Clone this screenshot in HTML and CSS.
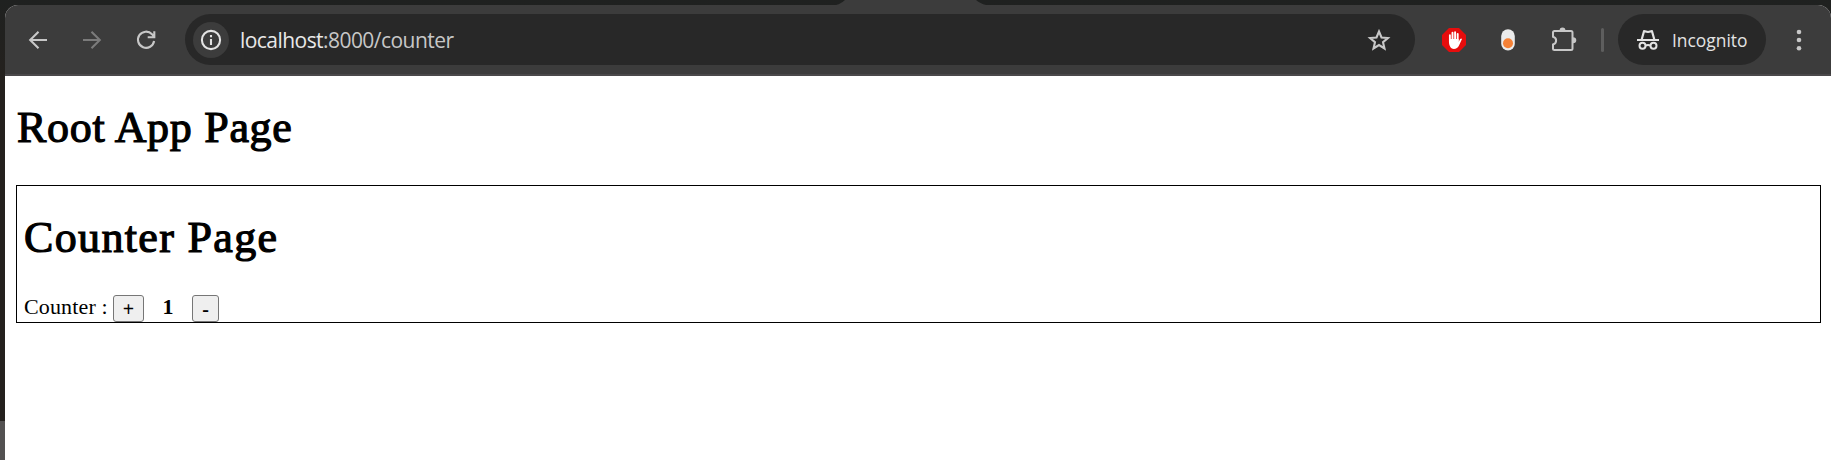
FILE: index.html
```html
<!DOCTYPE html>
<html lang="en">
<head>
<meta charset="utf-8">
<title>Root App Page</title>
<link rel="stylesheet" href="styles.css">
</head>
<body>
<div class="backdrop">
  <svg class="tab" width="150" height="5" viewBox="0 0 150 5"><path d="M0 5C4 4 6 2.500 9 0H140C143 2.500 146 4 150 5Z" fill="#3c3c3c"/></svg>
  <div class="window">
    <header class="toolbar">
      <nav class="nav">
        <svg class="icon" width="24" height="24" viewBox="0 0 24 24"><path d="M21 12H4M12.500 3.800 4.200 12l8.300 8.200"/></svg>
        <svg class="icon icon-off" width="24" height="24" viewBox="0 0 24 24"><path d="M3 12h17M11.500 3.800 19.800 12l-8.300 8.200"/></svg>
        <svg class="icon" width="24" height="24" viewBox="0 0 24 24"><path d="M20.100 13A8.100 8.100 0 1 1 18 6.200L20.300 9M20.300 3.200V9.200H13.700"/></svg>
      </nav>
      <div class="address">
        <span class="site-info">
          <svg class="icon icon-info" width="24" height="24" viewBox="0 0 24 24"><circle cx="12" cy="12" r="9.100"/><path d="M12 11v6M12 7v2.200"/></svg>
        </span>
        <span class="url"><span class="host">localhost</span>:8000/counter</span>
        <svg class="icon star" width="26" height="26" viewBox="0 0 26 26"><path d="M13 4.500 15.500 10.500 21.900 11 17 15.200 18.500 21.500 13 18.100 7.500 21.500 9 15.200 4.100 11 10.500 10.500Z"/></svg>
      </div>
      <div class="extensions">
        <svg width="26" height="26" viewBox="0 0 26 26"><path d="M8 1h10l7 7v10l-7 7H8l-7-7V8Z" fill="#e60d0d"/><path d="M8.900 15V8.200M11.500 13V5.700M14.100 13V5.200M16.700 14V7" stroke="#fff" stroke-width="1.900" stroke-linecap="round"/><path d="M8 12H17.600V15L19 12.300Q20.200 11 21 12.100L18 18.600Q16.500 22 12.800 22Q8.500 21.500 8 16Z" fill="#fff"/></svg>
        <svg width="14" height="22" viewBox="0 0 14 22"><rect x=".2" y=".2" width="13.600" height="21.400" rx="6.800" fill="#ebebeb"/><circle cx="7" cy="14.300" r="5" fill="#f58136"/></svg>
        <svg class="puzzle" width="26" height="26" viewBox="0 0 26 26"><path d="M3.500 4H20Q21.500 4 21.500 5.500V21.500Q21.500 23 20 23H3.500Q2 23 2 21.500V17.500A4 4 0 0 0 2 9.700V5.500Q2 4 3.500 4Z" fill="none" stroke="#c7c7c7" stroke-width="2"/><path d="M8.500 4a3 3.400 0 0 1 6 0ZM22 10.300a3.300 3 0 0 1 0 6Z" fill="#c7c7c7"/></svg>
      </div>
      <span class="divider"></span>
      <div class="incognito">
        <svg width="24" height="24" viewBox="0 0 24 24" fill="none" stroke="#e3e3e3" stroke-width="2"><path d="M1 12H23" stroke-width="2.200"/><path d="M5.700 11.500 8 3.200 12 4 16 3.200 18.300 11.500" stroke-linejoin="round" stroke-width="2.200"/><circle cx="6.500" cy="17.800" r="3"/><circle cx="17.500" cy="17.800" r="3"/><path d="M9.500 17.700Q12 16.200 14.500 17.700"/></svg>
        <span>Incognito</span>
      </div>
      <svg class="menu" width="6" height="24" viewBox="0 0 6 24" fill="#c7c7c7"><circle cx="3" cy="4" r="2.300"/><circle cx="3" cy="12" r="2.300"/><circle cx="3" cy="20.200" r="2.300"/></svg>
    </header>
    <main class="page">
      <h1 class="root-title">Root App Page</h1>
      <section class="panel">
        <h1 class="counter-title">Counter Page</h1>
        <div class="counter">
          <span class="label">Counter :</span>
          <button class="btn plus">+</button>
          <b class="value">1</b>
          <button class="btn minus">-</button>
        </div>
      </section>
    </main>
  </div>
</div>
</body>
</html>
```
FILE: styles.css
```css
* { box-sizing: border-box; }
body { margin: 0; }
.backdrop {
  position: relative;
  height: 460px;
  padding: 5px 0 0 5px;
  overflow: hidden;
  background: linear-gradient(#1f2120 0, #24211e 80px, #24211e 421px, #535151 421px);
}
.tab { position: absolute; left: 836px; top: 0; }
.window {
  height: 455px;
  border-radius: 13px 13px 0 0;
  overflow: hidden;
  background: #fff;
}
.toolbar {
  display: flex;
  align-items: center;
  height: 71px;
  border-bottom: 2px solid #4a484a;
  background: #3c3c3c;
}
.nav { display: flex; gap: 30px; width: 180px; padding-left: 21px; }
.icon { fill: none; stroke: #c7c7c7; stroke-width: 2.1; }
.icon-off { stroke: #7b7b7b; }
.icon-info { stroke: #e3e3e3; }
.address {
  display: flex;
  align-items: center;
  width: 1230px;
  height: 51px;
  padding: 0 23px 0 8px;
  border-radius: 26px;
  background: #282828;
}
.site-info {
  display: flex;
  align-items: center;
  justify-content: center;
  width: 36px;
  height: 36px;
  border-radius: 50%;
  background: #3c3c3c;
}
.url {
  margin-left: 11px;
  font: 21px/30px "Open Sans", "Noto Sans", sans-serif;
  letter-spacing: -0.55px;
  color: #c7c7c7;
}
.host { color: #e8e8e8; }
.star { margin-left: auto; }
.extensions { display: flex; align-items: center; width: 186px; padding-left: 26px; }
.extensions svg + svg { margin-left: 34px; }
.extensions .puzzle { margin-left: 36px; }
.divider { width: 3px; height: 24px; border-radius: 2px; background: #5e5e5e; }
.incognito {
  display: flex;
  align-items: center;
  gap: 12px;
  width: 148px;
  height: 51px;
  margin-left: 14px;
  padding-left: 18px;
  border-radius: 26px;
  background: #282828;
  color: #e3e3e3;
  font: 17.4px/24px "Open Sans", "Noto Sans", sans-serif;
}
.menu { margin-left: 30px; }
.page {
  padding: 26px 10px 0 11px;
  font-family: "Liberation Serif", serif;
  color: #000;
}
h1 {
  margin: 0;
  font-size: 44px;
  line-height: 52px;
  font-weight: 400;
  -webkit-text-stroke: 1.2px #000;
  white-space: nowrap;
}
.root-title { padding-left: 1px; letter-spacing: 0.7px; }
.counter-title { letter-spacing: 1.35px; }
.panel { height: 138px; margin-top: 31px; padding: 26px 0 0 7px; border: 1px solid #000; }
.counter { display: flex; align-items: center; height: 27px; margin-top: 31px; font-size: 22px; }
.label { width: 89px; margin-top: -3px; letter-spacing: 0.15px; white-space: nowrap; }
.btn {
  height: 27px;
  padding: 0;
  border: 1px solid #767676;
  border-radius: 3px;
  background: #efefef;
  color: #000;
  font: bold 20px/24px "Liberation Serif", serif;
}
.plus { width: 31px; }
.minus { width: 27px; }
.value { width: 48px; margin-top: -3px; text-align: center; }
```
